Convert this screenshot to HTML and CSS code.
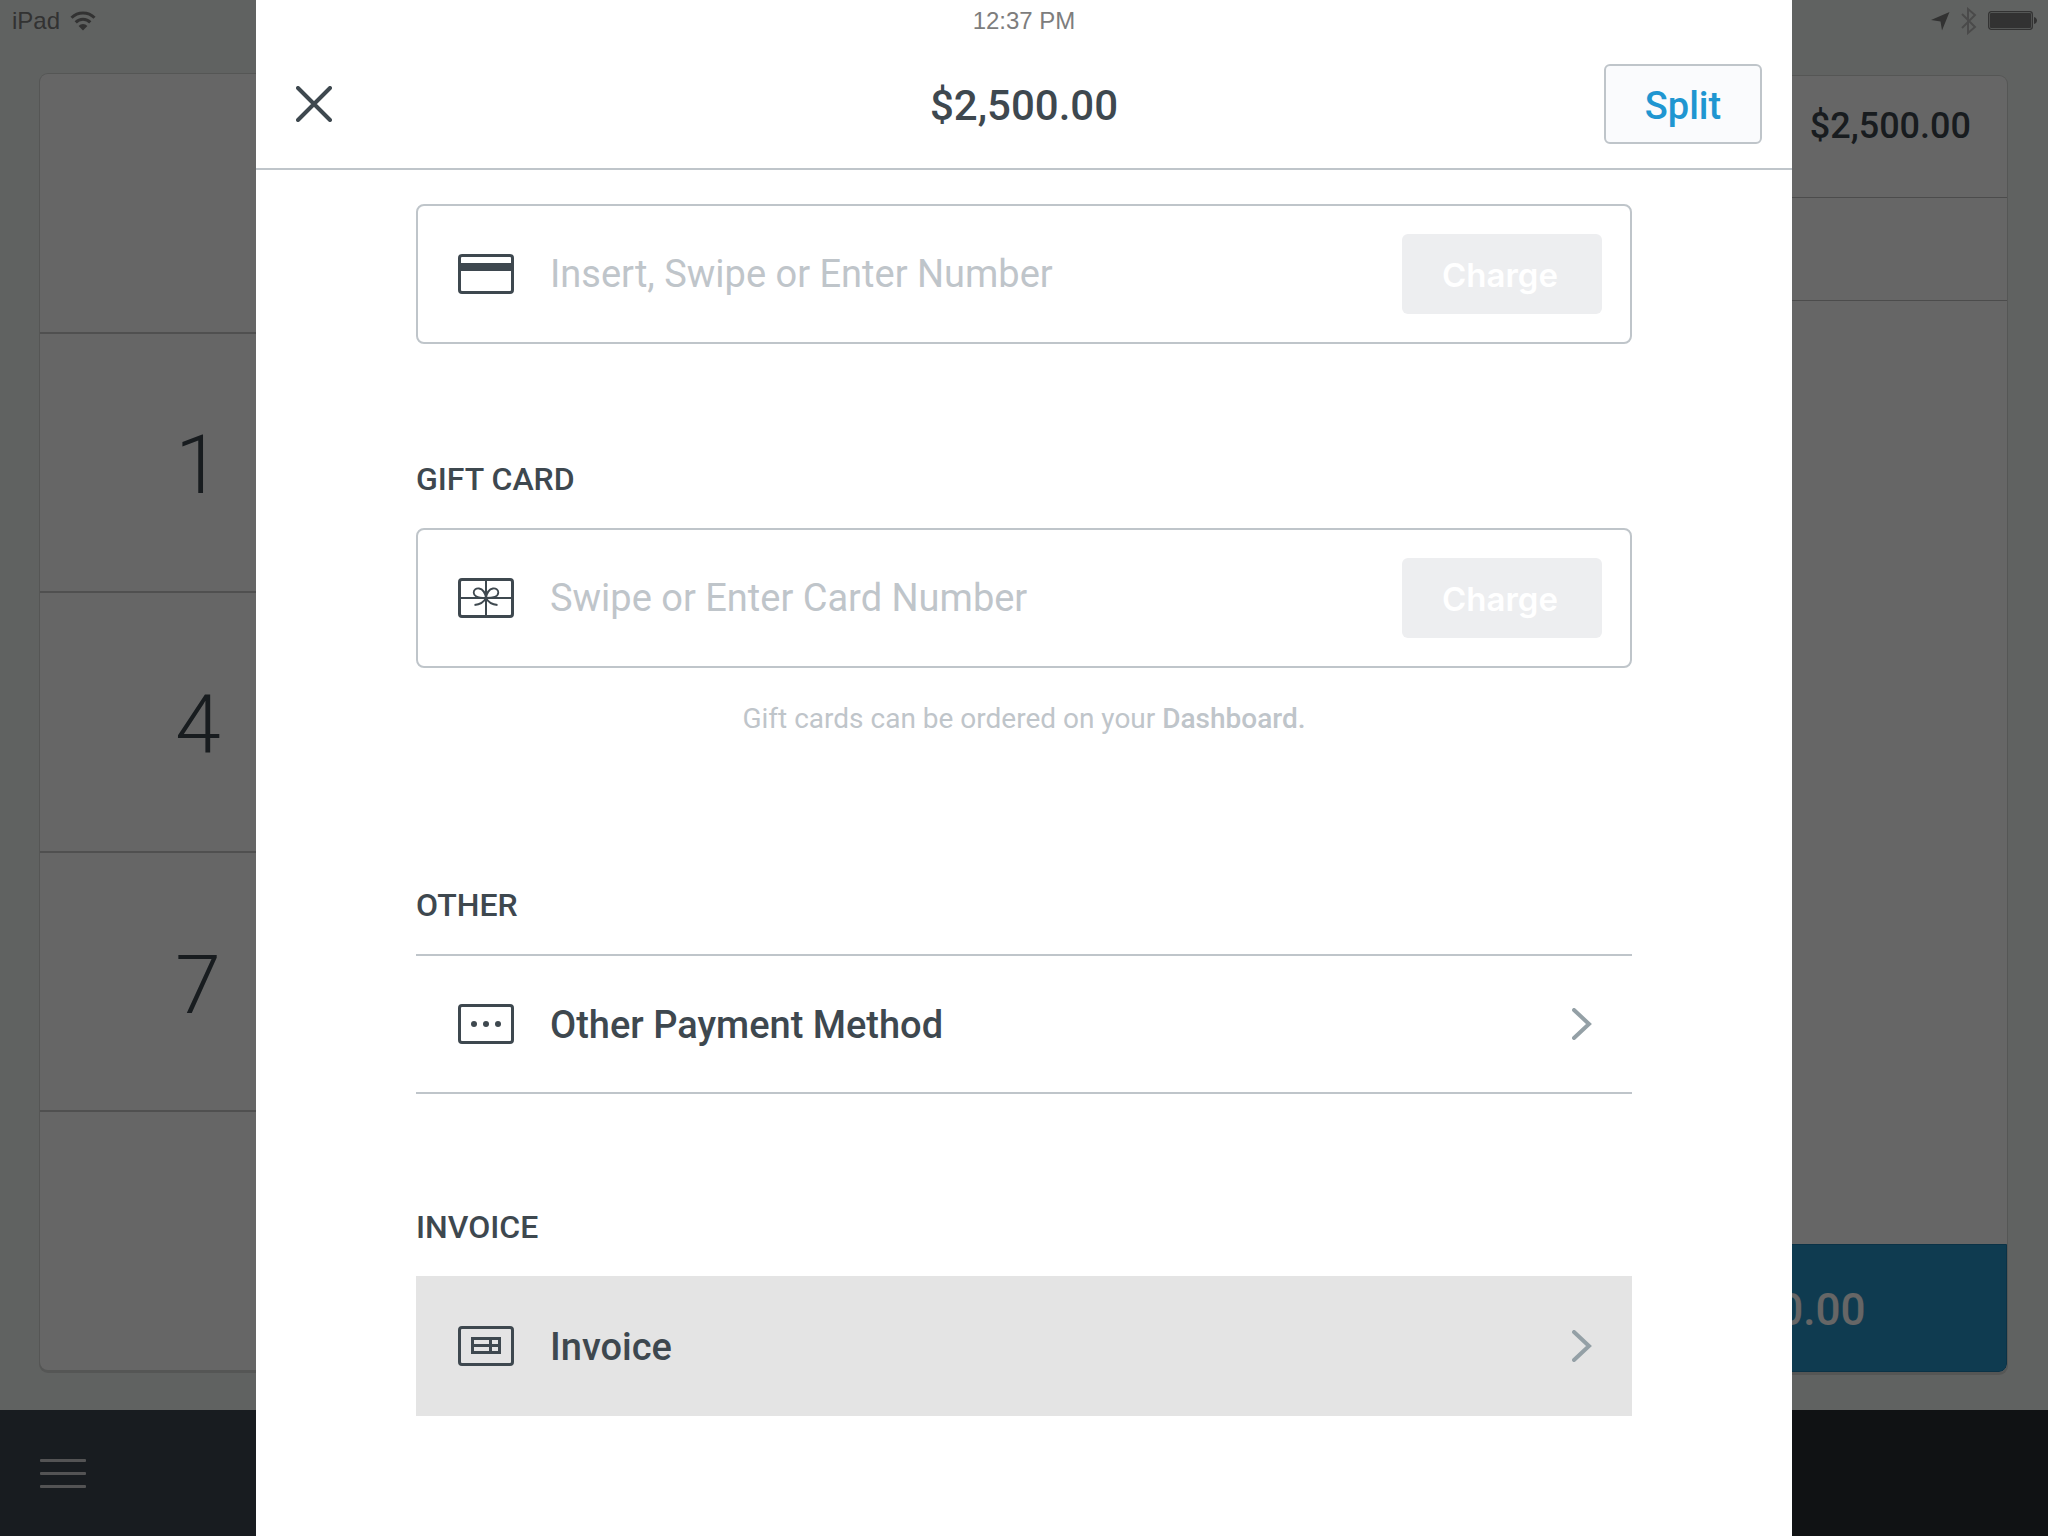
FILE: index.html
```html
<!DOCTYPE html>
<html lang="en">
<head>
<meta charset="utf-8">
<meta name="viewport" content="width=device-width, initial-scale=1">
<title>Payment</title>
<link rel="stylesheet" href="styles.css">
</head>
<body>
<div class="app">
  <div class="status">
    <div class="status-group">
      <span>iPad</span>
      <svg width="26" height="20" viewBox="0 0 26 20" fill="none" stroke="currentColor" stroke-width="3" aria-hidden="true">
        <path d="M1.5 6.8a16 16 0 0 1 23 0M5.7 11.4a10 10 0 0 1 14.600 0"/>
        <path d="M8.600 15a6 6 0 0 1 8.800 0L13 19.500z" fill="currentColor" stroke="none"/>
      </svg>
    </div>
    <div class="status-group">
      <svg width="19" height="19" viewBox="0 0 19 19" fill="currentColor" aria-hidden="true"><path d="M18.500 0 11 18.500 9.500 9.500 0 8z"/></svg>
      <svg class="faint" width="18" height="28" viewBox="0 0 18 28" fill="none" stroke="currentColor" stroke-width="2" aria-hidden="true"><path d="M2 7l13 13-7 6V2l7 6L2 21"/></svg>
      <svg width="50" height="20" viewBox="0 0 50 20" aria-hidden="true"><rect x=".7" y=".7" width="43.600" height="17.600" rx="2.500" fill="none" stroke="currentColor" stroke-width="1.300"/><rect x="2" y="2" width="41" height="15" rx="1" fill="currentColor"/><path d="M46 6c4 1 4 6 0 7z" fill="currentColor"/></svg>
    </div>
  </div>
  <main class="register">
    <div class="keypad card">
      <div class="keypad-row"></div>
      <div class="keypad-row"><button class="key" type="button">1</button></div>
      <div class="keypad-row"><button class="key" type="button">4</button></div>
      <div class="keypad-row"><button class="key" type="button">7</button></div>
      <div class="keypad-row"></div>
    </div>
    <div class="cart card">
      <div class="cart-total">$2,500.00</div>
      <div class="cart-line"></div>
      <button class="cart-charge" type="button">Charge $2,500.00</button>
    </div>
  </main>
  <footer class="toolbar">
    <div class="toolbar-left">
      <button class="menu" type="button" aria-label="Menu"><span class="bar"></span><span class="bar"></span><span class="bar"></span></button>
    </div>
    <div class="toolbar-right"></div>
  </footer>
</div>

<div class="overlay">
  <section class="sheet" role="dialog" aria-labelledby="amount">
    <header class="sheet-head">
      <div class="clock">12:37 PM</div>
      <div class="sheet-bar">
        <button class="close" type="button" aria-label="Close">
          <svg width="36" height="36" viewBox="0 0 36 36" fill="none" stroke="currentColor" stroke-width="4" stroke-linecap="round" aria-hidden="true"><path d="M2 2l32 32M34 2 2 34"/></svg>
        </button>
        <h1 class="amount" id="amount">$2,500.00</h1>
        <button class="split" type="button">Split</button>
      </div>
    </header>
    <div class="sheet-body">
      <form class="field">
        <svg class="icon" viewBox="0 0 56 40" aria-hidden="true"><rect x="1.500" y="1.500" width="53" height="37" rx="2.500" fill="none" stroke="currentColor" stroke-width="3"/><path d="M2 9h52v8H2z" fill="currentColor"/></svg>
        <input class="number" type="text" placeholder="Insert, Swipe or Enter Number" aria-label="Card number">
        <button class="charge" type="button" disabled>Charge</button>
      </form>

      <h2 class="title" id="gift-title">GIFT CARD</h2>
      <form class="field">
        <svg class="icon" viewBox="0 0 56 40" fill="none" stroke="currentColor" aria-hidden="true"><rect x="1.500" y="1.500" width="53" height="37" rx="2.500" stroke-width="3"/><path d="M28 2v36M2 20h52" stroke-width="2"/><path d="M28 20C18 20 15.700 17.500 15.700 14.500 15.700 9 26 7.500 28 20 30 7.500 40.300 9 40.300 14.500 40.300 17.500 38 20 28 20M28 20c-2 4-6 6.500-11.500 7M28 20c2 4 6 6.500 11.500 7" stroke-width="1.800"/></svg>
        <input class="number" type="text" placeholder="Swipe or Enter Card Number" aria-labelledby="gift-title">
        <button class="charge" type="button" disabled>Charge</button>
      </form>
      <p class="hint">Gift cards can be ordered on your <a class="hint-link" href="#">Dashboard.</a></p>

      <h2 class="title">OTHER</h2>
      <button class="row" type="button">
        <svg class="icon" viewBox="0 0 56 40" aria-hidden="true"><rect x="1.500" y="1.500" width="53" height="37" rx="2.500" fill="none" stroke="currentColor" stroke-width="3"/><g fill="currentColor"><circle cx="16" cy="20" r="3"/><circle cx="28" cy="20" r="3"/><circle cx="40" cy="20" r="3"/></g></svg>
        <span class="row-label">Other Payment Method</span>
        <svg class="chevron" viewBox="0 0 20 32" aria-hidden="true"><path d="M2 2l15 14L2 30"/></svg>
      </button>

      <h2 class="title">INVOICE</h2>
      <button class="row row-pressed" type="button">
        <svg class="icon" viewBox="0 0 56 40" fill="none" stroke="currentColor" aria-hidden="true"><rect x="1.500" y="1.500" width="53" height="37" rx="2.500" stroke-width="3"/><path d="M14.500 12.500h27v14h-27zM14 19.500h28M32.500 12v15" stroke-width="3"/></svg>
        <span class="row-label">Invoice</span>
        <svg class="chevron" viewBox="0 0 20 32" aria-hidden="true"><path d="M2 2l15 14L2 30"/></svg>
      </button>
    </div>
  </section>
</div>
</body>
</html>
```
FILE: styles.css
```css
* { box-sizing: border-box; }

:root {
  --ink: #3e484f;
  --line: #bfc5ca;
  --blue: #1f96d1;
}

body {
  margin: 0;
  font-family: Roboto, "Liberation Sans", sans-serif;
  color: var(--ink);
}

button, input { font: inherit; color: inherit; }
button { padding: 0; border: 0; background: none; cursor: pointer; }
svg { display: block; flex: none; }

/* Register behind the sheet */
.app {
  display: flex;
  flex-direction: column;
  min-height: 100vh;
  background: #f0f5f2;
}

.status {
  display: flex;
  justify-content: space-between;
  align-items: center;
  height: 42px;
  padding: 0 10px 0 12px;
  color: #7d7d7d;
  font: 24px/42px "Liberation Sans", sans-serif;
}
.status-group { display: flex; align-items: center; gap: 10px; }
.faint { color: #b9b9b9; }

.register {
  flex: 1;
  display: grid;
  grid-template-columns: 2fr 1fr;
  gap: 72px;
  padding: 32px 41px 38px 40px;
}
.card {
  display: flex;
  flex-direction: column;
  overflow: hidden;
  border-radius: 8px;
  background: #fff;
  box-shadow: 0 0 0 1px #d4d6d5, 0 2px 0 1px #d4d6d5;
}

.keypad { margin-bottom: 2px; }
.keypad-row {
  flex: 1;
  display: grid;
  grid-template-columns: repeat(4, 1fr);
  border-bottom: 2px solid #c8c8c8;
}
.keypad-row:last-child { border-bottom: 0; }
.key { padding-top: 6px; font-size: 82px; font-weight: 300; line-height: 1; }

.cart { margin-top: 2px; }
.cart-total {
  height: 122px;
  padding: 28px 36px;
  border-bottom: 1px solid #bfbfbf;
  font-size: 36px;
  font-weight: 500;
  line-height: 44px;
  text-align: right;
}
.cart-line { height: 103px; border-bottom: 1px solid #bfbfbf; }
.cart-charge {
  height: 128px;
  margin-top: auto;
  padding-top: 4px;
  border: 1px solid #1c7db0;
  border-radius: 0 0 8px 8px;
  background: #2795c8;
  color: #fff;
  font-size: 44px;
  font-weight: 500;
}

.toolbar { display: flex; height: 126px; }
.toolbar-left { flex: 2; display: flex; align-items: center; padding-left: 40px; background: #3e4850; }
.toolbar-right { flex: 1; background: #2a2d32; }
.menu { display: flex; flex-direction: column; gap: 10px; }
.bar { width: 46px; height: 3px; border-radius: 1px; background: #cfd0d2; }

/* Payment sheet */
.overlay {
  position: fixed;
  inset: 0;
  display: flex;
  justify-content: center;
  background: rgba(0, 0, 0, .6);
}
.sheet { width: 75%; overflow: auto; background: #fff; }
.sheet-head { border-bottom: 2px solid var(--line); }
.clock {
  color: #7d7d7d;
  font: 24px/42px "Liberation Sans", sans-serif;
  text-align: center;
}
.sheet-bar {
  display: grid;
  grid-template-columns: 1fr auto 1fr;
  align-items: center;
  height: 126px;
  padding: 0 30px 2px;
}
.close { justify-self: start; padding: 0 10px; }
.amount { margin: 0; padding-top: 2px; font-size: 42px; font-weight: 500; }
.split {
  justify-self: end;
  width: 158px;
  height: 80px;
  padding-top: 4px;
  border: 2px solid var(--line);
  border-radius: 6px;
  background: #fafbfd;
  color: var(--blue);
  font-size: 38px;
  font-weight: 500;
}

.sheet-body { padding: 34px 160px; }

.field, .row {
  display: flex;
  align-items: center;
  gap: 36px;
  width: 100%;
  height: 140px;
}
.field {
  margin: 0;
  padding: 0 28px 0 40px;
  border: 2px solid var(--line);
  border-radius: 8px;
}
.icon { width: 56px; height: 40px; color: var(--ink); }
.number {
  flex: 1;
  min-width: 0;
  height: 80px;
  padding: 0;
  border: 0;
  outline: 0;
  background: none;
  font-size: 38px;
}
.number::placeholder { color: var(--line); opacity: 1; }
.charge {
  width: 200px;
  height: 80px;
  padding: 2px 4px 0 0;
  border-radius: 6px;
  background: #edeef0;
  color: #fff;
  font-family: Inter, sans-serif;
  font-size: 33px;
  font-weight: 600;
}

.title {
  margin: 116px 0 30px;
  font-size: 32px;
  font-weight: 500;
  line-height: 38px;
}
.hint {
  margin: 36px 0 0;
  color: var(--line);
  font-size: 28px;
  line-height: 30px;
  text-align: center;
}
.hint + .title { margin-top: 152px; }
.hint-link { color: inherit; font-weight: 500; text-decoration: none; }

.row {
  padding: 0 40px 0 42px;
  border: 2px solid var(--line);
  border-width: 2px 0;
  text-align: left;
}
.row + .title { margin-top: 114px; }
.row-pressed { border-color: transparent; background: #e4e4e4; }
.row-label { flex: 1; padding-top: 2px; font-size: 38px; font-weight: 500; }
.chevron {
  width: 20px;
  height: 32px;
  fill: none;
  stroke: #94a0a6;
  stroke-width: 4;
  stroke-linecap: round;
}
```
